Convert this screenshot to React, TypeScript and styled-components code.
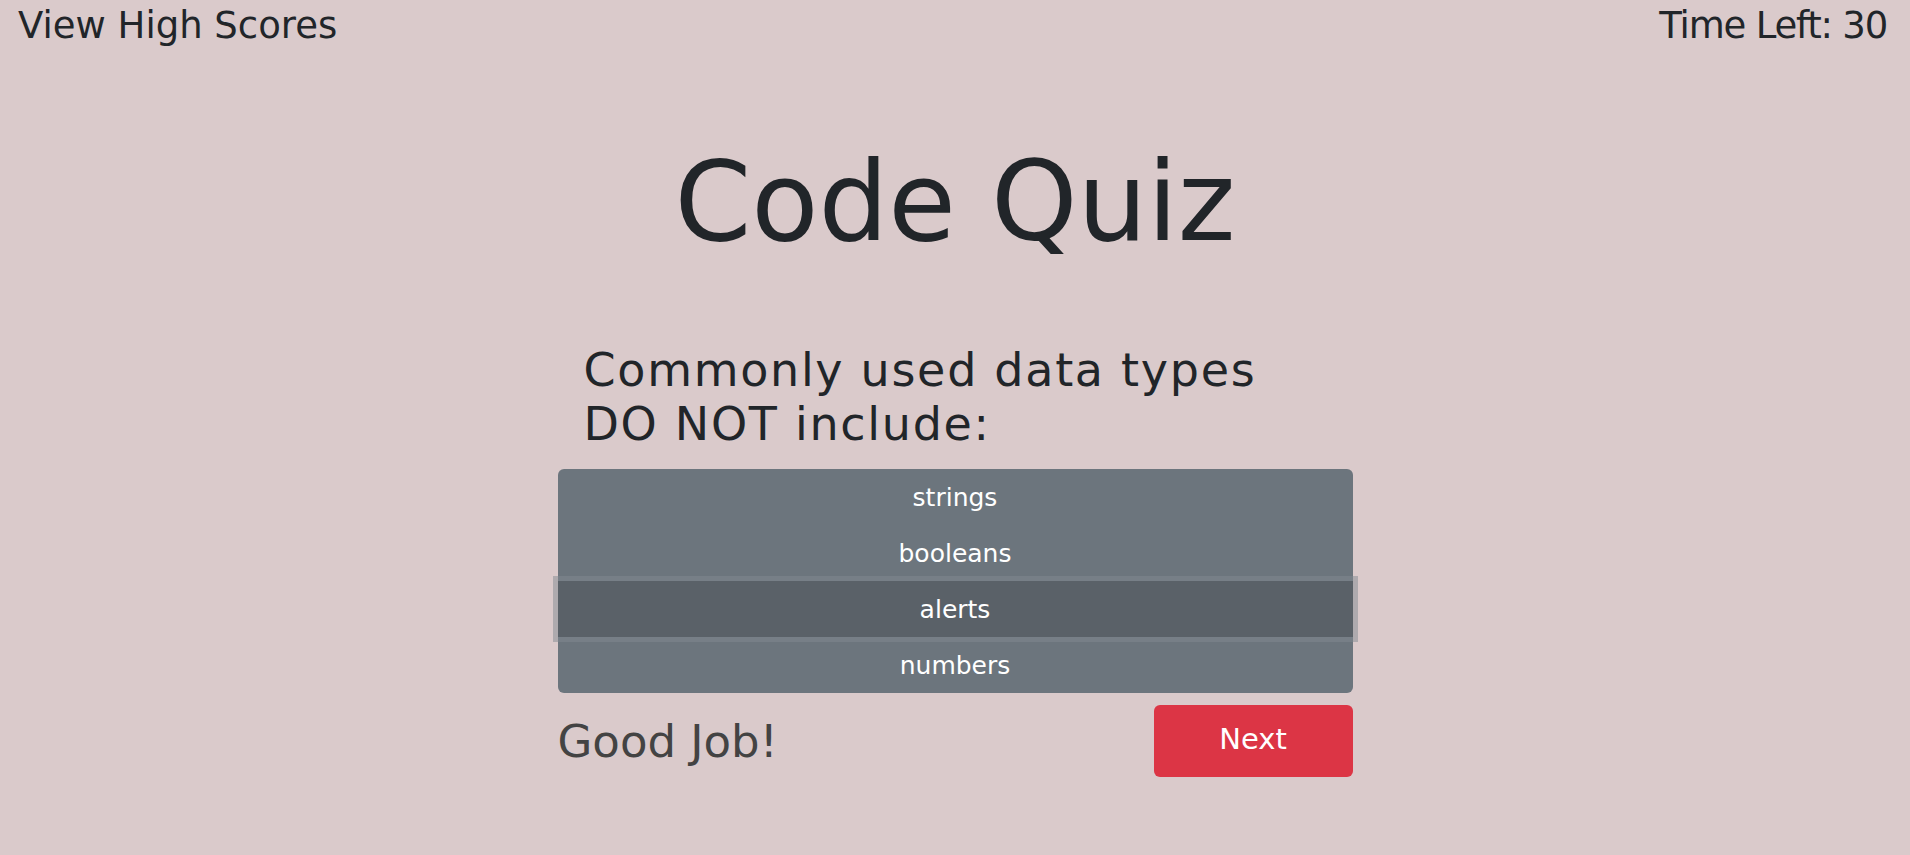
import React from "react";
import styled, { createGlobalStyle } from "styled-components";

const GlobalStyle = createGlobalStyle`
  html, body {
    margin: 0;
    padding: 0;
    background: #dacacb;
  }
  body {
    font-family: "DejaVu Sans", "Lato", sans-serif;
    color: #212529;
  }
`;

const Page = styled.div`
  min-height: 855px;
  display: flex;
  flex-direction: column;
`;

const TopBar = styled.header`
  display: flex;
  justify-content: space-between;
  align-items: flex-start;
  padding: 0 23px 0 18px;
`;

const TopText = styled.a<{ $tight?: boolean }>`
  font-size: 37px;
  line-height: 52px;
  letter-spacing: ${(p) => (p.$tight ? "-1.2px" : "0")};
  color: #212529;
  text-decoration: none;
  cursor: pointer;
`;

const Main = styled.main`
  width: 795px;
  margin: 0 auto;
  display: flex;
  flex-direction: column;
`;

const Title = styled.h1`
  margin: 85px 0 0;
  font-size: 110px;
  font-weight: 400;
  line-height: 130px;
  text-align: center;
  color: #212529;
`;

const Question = styled.h2`
  margin: 76px 0 18px;
  padding-left: 26px;
  max-width: 720px;
  font-size: 46px;
  font-weight: 400;
  letter-spacing: 1.7px;
  line-height: 54px;
  color: #212529;
`;

const Choices = styled.div`
  display: flex;
  flex-direction: column;
`;

const Choice = styled.button<{ $active?: boolean; $pos: "first" | "mid" | "last" }>`
  height: 56px;
  border: none;
  margin: 0;
  padding: 0 12px;
  font-family: inherit;
  font-size: 25px;
  color: #ffffff;
  background: ${(p) => (p.$active ? "#5a6168" : "#6c757d")};
  border-radius: ${(p) =>
    p.$pos === "first" ? "6px 6px 0 0" : p.$pos === "last" ? "0 0 6px 6px" : "0"};
  box-shadow: ${(p) => (p.$active ? "0 0 0 5px rgba(130, 138, 145, 0.5)" : "none")};
  position: ${(p) => (p.$active ? "relative" : "static")};
  z-index: ${(p) => (p.$active ? 1 : 0)};
  cursor: pointer;
`;

const Footer = styled.div`
  display: flex;
  justify-content: space-between;
  align-items: center;
  margin-top: 12px;
`;

const Feedback = styled.p`
  margin: 0;
  font-size: 45px;
  color: #434343;
`;

const NextButton = styled.button`
  width: 199px;
  height: 72px;
  border: none;
  border-radius: 6px;
  padding: 0 0 4px;
  background: #dc3545;
  color: #ffffff;
  font-family: inherit;
  font-size: 29px;
  cursor: pointer;
`;

const answers = ["strings", "booleans", "alerts", "numbers"];

export default function App() {
  return (
    <>
      <GlobalStyle />
      <Page>
        <TopBar>
          <TopText>View High Scores</TopText>
          <TopText $tight>Time Left: 30</TopText>
        </TopBar>
        <Main>
          <Title>Code Quiz</Title>
          <Question>Commonly used data types DO NOT include:</Question>
          <Choices>
            {answers.map((a, i) => (
              <Choice
                key={a}
                $active={a === "alerts"}
                $pos={i === 0 ? "first" : i === answers.length - 1 ? "last" : "mid"}
              >
                {a}
              </Choice>
            ))}
          </Choices>
          <Footer>
            <Feedback>Good Job!</Feedback>
            <NextButton>Next</NextButton>
          </Footer>
        </Main>
      </Page>
    </>
  );
}
